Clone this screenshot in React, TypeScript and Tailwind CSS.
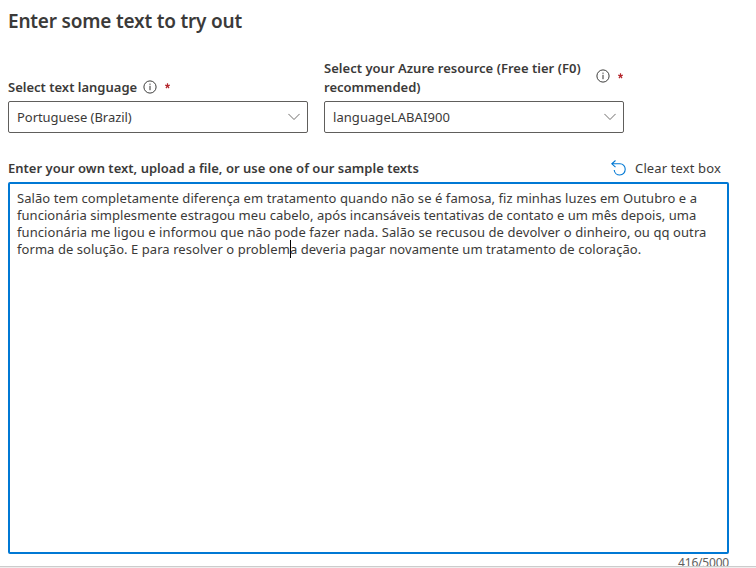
import React from "react";

const review = [
  { text: "Salão tem completamente diferença em tratamento quando não se é famosa, fiz minhas luzes em Outubro e a", tracking: "tracking-[0.068px]" },
  { text: "funcionária simplesmente estragou meu cabelo, após incansáveis tentativas de contato e um mês depois, uma", tracking: "tracking-[0.04px]" },
  { text: "funcionária me ligou e informou que não pode fazer nada. Salão se recusou de devolver o dinheiro, ou qq outra", tracking: "tracking-[0.08px]" },
];

function InfoIcon() {
  return (
    <svg width="14" height="14" viewBox="0 0 14 14" fill="none" className="shrink-0">
      <circle cx="7" cy="7" r="6.1" stroke="#323130" strokeWidth="0.95" />
      <path d="M7 5.8V10.2M7 3.6V4.8" stroke="#323130" strokeWidth="1" />
    </svg>
  );
}

function Asterisk() {
  return (
    <svg width="5" height="6" viewBox="0 0 5 6" fill="none" className="shrink-0">
      <path d="M2.5 0.3V3M0.2 2.1L2.5 2.9L4.8 2.1M1 5.2L2.5 2.9L4 5.2" stroke="#b4262c" strokeWidth="1.2" />
    </svg>
  );
}

function Select({ value, tracking }: { value: string; tracking: string }) {
  return (
    <div className="flex h-8 w-[300px] items-center justify-between rounded-[2px] border border-[#605e5c] bg-white pr-[7px] pl-2">
      <span className={`whitespace-nowrap text-[13px] leading-8 ${tracking}`}>{value}</span>
      <svg width="12" height="8" viewBox="0 0 12 8" fill="none">
        <path d="M0.4 0.9L6 6.5L11.6 0.9" stroke="#605e5c" strokeWidth="0.9" />
      </svg>
    </div>
  );
}

export default function App() {
  return (
    <div className="flex h-[568px] w-[756px] flex-col overflow-hidden bg-white font-['Noto_Sans',sans-serif] text-[#3b3a39]">
      <div className="h-[566px] shrink-0 overflow-hidden pl-2">
        <h1 className="mt-[7px] h-[28px] w-max text-[19px] leading-7 font-semibold tracking-[-0.2px]">Enter some text to try out</h1>
        <div className="mt-6 flex h-[74px] items-end gap-4">
          <div>
            <div className="mb-[5px] flex h-[18px] items-center">
              <span className="w-[135px] whitespace-nowrap text-[13px] leading-[18px] font-semibold">Select text language</span>
              <InfoIcon />
              <span className="mb-[3px] ml-[8px]"><Asterisk /></span>
            </div>
            <Select value="Portuguese (Brazil)" tracking="tracking-[-0.05px]" />
          </div>
          <div>
            <div className="mb-[4px] flex h-[38px] items-center">
              <div className="w-[272px] whitespace-nowrap text-[13px] leading-[19px] font-semibold">
                <div className="w-max tracking-[0.025px]">Select your Azure resource (Free tier (F0)</div>
                <div className="w-max">recommended)</div>
              </div>
              <span className="mb-1"><InfoIcon /></span>
              <span className="mb-1 ml-[8px]"><Asterisk /></span>
            </div>
            <Select value="languageLABAI900" tracking="tracking-[0.06px]" />
          </div>
        </div>
        <div className="mt-[25px] flex h-[24px] w-[721px] items-start justify-between pr-2">
          <span className="w-max whitespace-nowrap text-[13px] leading-5 font-semibold tracking-[0.015px]">Enter your own text, upload a file, or use one of our sample texts</span>
          <button className="flex items-start text-[13px] leading-5">
            <svg width="15" height="16" viewBox="0 0 15 16" fill="none" className="mt-[2px] mr-[9px]">
              <path d="M4.5 0.5L0.8 3.8L4.5 7.2M0.8 3.8H9C12 3.8 14.2 6.3 14.2 9.3C14.2 12.5 11.9 15 8.8 15C5.8 15 3.5 12.8 3.2 10" stroke="#0078d4" strokeWidth="1.1" />
            </svg>
            <span className="w-max whitespace-nowrap tracking-[0.13px]">Clear text box</span>
          </button>
        </div>
        <div className="h-[372px] w-[721px] rounded-[2px] border-2 border-[#0078d4] px-[7px] pt-[6px] text-[13px] leading-[17px]">
          {review.map((l) => (
            <div key={l.text} className={`w-max whitespace-nowrap ${l.tracking}`}>{l.text}</div>
          ))}
          <div className="flex h-[17px] w-max whitespace-nowrap tracking-[0.06px]">
            <span>forma de solução. E para resolver o problem</span>
            <span className="-mt-px -mr-px h-[18px] w-px bg-black" />
            <span>a deveria pagar novamente um tratamento de coloração.</span>
          </div>
        </div>
        <div className="flex w-[721px] justify-end text-[12px] leading-[18px] text-[#605e5c]"><span className="tracking-[-0.2px]">416/5000</span></div>
      </div>
      <div className="h-px shrink-0 bg-[#cccccc]" />
      <div className="h-px shrink-0 bg-[#eeeeee]" />
    </div>
  );
}
